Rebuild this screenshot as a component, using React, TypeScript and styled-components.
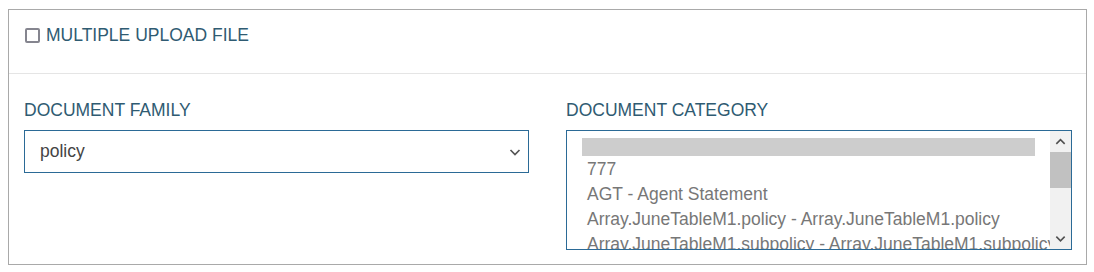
import * as React from 'react';
import styled, { createGlobalStyle } from 'styled-components';

const GlobalStyle = createGlobalStyle`
  body {
    margin: 0;
    background: #ffffff;
    font-family: 'Liberation Sans', Arial, sans-serif;
  }
`;

const Page = styled.div`
  padding: 9px 8px 0 8px;
`;

const Panel = styled.div`
  width: 1077px;
  height: 254px;
  border: 1px solid #a9a9a9;
  overflow: hidden;
`;

const PanelHeader = styled.div`
  height: 64px;
  border-bottom: 1px solid #e5e5e5;
  display: flex;
  align-items: center;
  padding: 0 0 12px 16px;
  box-sizing: border-box;
`;

const CheckBox = styled.span`
  width: 11px;
  height: 11px;
  border: 2px solid #85858f;
  border-radius: 2px;
  margin-right: 6px;
  flex-shrink: 0;
`;

const HeaderLabel = styled.span`
  font-size: 17.5px;
  color: #2f5b72;
`;

const Fields = styled.div`
  display: grid;
  grid-template-columns: 505px 506px;
  column-gap: 37px;
  padding: 26px 0 0 15px;
`;

const Field = styled.div`
  display: flex;
  flex-direction: column;
`;

const FieldLabel = styled.label`
  font-size: 17.5px;
  color: #2f5b72;
  line-height: 20px;
  margin-bottom: 10px;
`;

const SelectBox = styled.div`
  height: 43px;
  box-sizing: border-box;
  border: 1px solid #2b6a96;
  display: flex;
  align-items: center;
  justify-content: space-between;
  padding: 0 6px 0 15px;
  font-size: 17.5px;
  color: #444;
`;

const ListBox = styled.div`
  height: 120px;
  box-sizing: border-box;
  border: 1px solid #2b6a96;
  display: flex;
  overflow: hidden;
`;

const Options = styled.div`
  flex: 1;
  min-width: 0;
  padding: 7px 15px 0 15px;
  overflow: hidden;
`;

const Option = styled.div<{ $selected?: boolean }>`
  font-size: 17.5px;
  color: #777;
  white-space: nowrap;
  height: ${(p) => (p.$selected ? '18px' : '25px')};
  line-height: 25px;
  padding-left: 5px;
  margin-bottom: ${(p) => (p.$selected ? '1px' : '0')};
  background: ${(p) => (p.$selected ? '#cdcdcd' : 'transparent')};
`;

const ScrollBar = styled.div`
  width: 21px;
  background: #f1f1f1;
  display: flex;
  flex-direction: column;
  align-items: center;
  flex-shrink: 0;
`;

const ScrollArrow = styled.div`
  height: 21px;
  width: 100%;
  display: flex;
  align-items: center;
  justify-content: center;
`;

const ScrollTrack = styled.div`
  flex: 1;
  width: 100%;
`;

const ScrollThumb = styled.div`
  height: 36px;
  background: #c1c1c1;
`;

const Chevron = ({ up, size = 14, color = '#555' }: { up?: boolean; size?: number; color?: string }) => (
  <svg width={size} height={size} viewBox="0 0 14 14">
    <path
      d={up ? 'M2.5 9.5 L7 5 L11.5 9.5' : 'M2.5 5 L7 9.5 L11.5 5'}
      fill="none"
      stroke={color}
      strokeWidth="1.7"
    />
  </svg>
);

const categories = [
  '777',
  'AGT - Agent Statement',
  'Array.JuneTableM1.policy - Array.JuneTableM1.policy',
  'Array.JuneTableM1.subpolicy - Array.JuneTableM1.subpolicy',
];

export default function App() {
  return (
    <Page>
      <GlobalStyle />
      <Panel>
        <PanelHeader>
          <CheckBox />
          <HeaderLabel>MULTIPLE UPLOAD FILE</HeaderLabel>
        </PanelHeader>

        <Fields>
          <Field>
            <FieldLabel>DOCUMENT FAMILY</FieldLabel>
            <SelectBox>
              <span>policy</span>
              <Chevron />
            </SelectBox>
          </Field>

          <Field>
            <FieldLabel>DOCUMENT CATEGORY</FieldLabel>
            <ListBox>
              <Options>
                <Option $selected />
                {categories.map((c) => (
                  <Option key={c}>{c}</Option>
                ))}
              </Options>
              <ScrollBar>
                <ScrollArrow>
                  <Chevron up size={13} color="#505050" />
                </ScrollArrow>
                <ScrollTrack>
                  <ScrollThumb />
                </ScrollTrack>
                <ScrollArrow>
                  <Chevron size={13} color="#505050" />
                </ScrollArrow>
              </ScrollBar>
            </ListBox>
          </Field>
        </Fields>
      </Panel>
    </Page>
  );
}
